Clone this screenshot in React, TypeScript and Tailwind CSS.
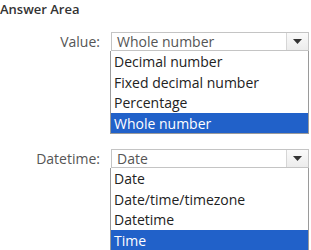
import React from 'react';

interface DropdownProps {
  label: string;
  value: string;
  options: string[];
  selected: string;
}

const Dropdown: React.FC<DropdownProps> = ({ label, value, options, selected }) => {
  return (
    <div className="flex items-start">
      <div className="w-[110px] pr-[10px] text-right text-[14px] leading-[19px] text-[#555]">{label}</div>
      <div className="w-[199px]">
        {/* Closed select */}
        <div className="ml-[1px] flex h-[19px] border border-[#c4c4c4] bg-white">
          <div className="flex-1 pl-[5px] text-[14px] leading-[18px] text-[#555]">{value}</div>
          <div className="flex w-[22px] items-center justify-center border-l border-[#d6d6d6] bg-gradient-to-b from-[#fafafa] to-[#ececec]">
            <svg width="9" height="5" viewBox="0 0 9 5">
              <path d="M0 0 L9 0 L4.5 5 Z" fill="#333" />
            </svg>
          </div>
        </div>
        {/* Open list */}
        <div className="border border-t-0 border-[#9a9a9a] bg-white">
          {options.map((opt) => (
            <div
              key={opt}
              className={
                opt === selected
                  ? 'h-[20.5px] pl-[3px] text-[14px] leading-[21px] text-white bg-[#2161c9]'
                  : 'h-[20.5px] pl-[3px] text-[14px] leading-[21px] text-[#222]'
              }
            >
              {opt}
            </div>
          ))}
        </div>
      </div>
    </div>
  );
};

export default function App() {
  return (
    <div className="h-[250px] w-[311px] overflow-hidden bg-white font-['Open_Sans',sans-serif]">
      <div className="pt-[1px] text-[13px] font-semibold leading-[16px] text-[#333]">Answer Area</div>
      <div className="mt-[15px] flex flex-col gap-[15px]">
        <Dropdown
          label="Value:"
          value="Whole number"
          options={['Decimal number', 'Fixed decimal number', 'Percentage', 'Whole number']}
          selected="Whole number"
        />
        <Dropdown
          label="Datetime:"
          value="Date"
          options={['Date', 'Date/time/timezone', 'Datetime', 'Time']}
          selected="Time"
        />
      </div>
    </div>
  );
}
